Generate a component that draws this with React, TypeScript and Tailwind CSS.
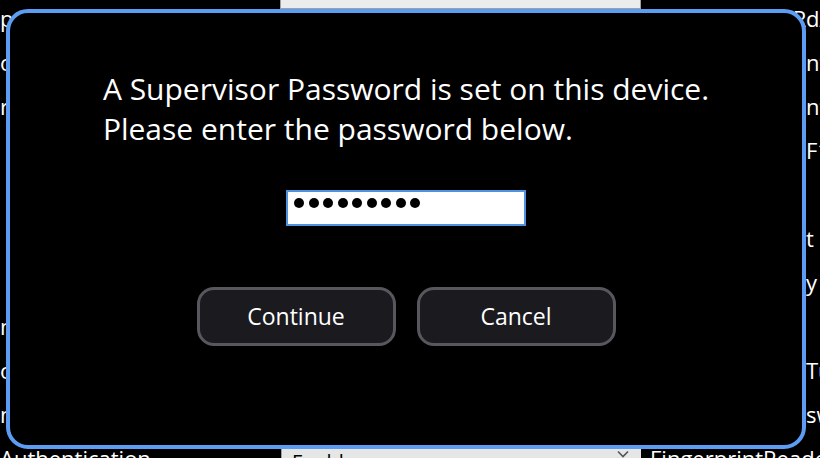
const rows = [
  { left: "ptionRomLaunch", hidden: "BiosPasswordRequire", shown: "dAtBoot" },
  { left: "owerOnPassword", hidden: "PasswordComplexityCheckI", shown: "nt" },
  { left: "r'sPasswordSet", hidden: "PasswordMinimumLengthCou", shown: "nt" },
  { left: "", hidden: "SecureBootKeyManagement", shown: "F1" },
  { left: "", hidden: "", shown: "" },
  { left: "", hidden: "TrustedPlatformModuleStat", shown: "t" },
  { left: "", hidden: "SecurityChipRecoveryKe", shown: "y" },
  { left: "nvironmentLock", hidden: "", shown: "" },
  { left: "oneTouchLogin", hidden: "IntelTrustedExecutionTec", shown: "Tu" },
  { left: "nStartupCheck", hidden: "HardDiskPasswordAnsw", shown: "sw" },
];

function Dots({ count }: { count: number }) {
  return (
    <div className="flex gap-[4.5px] pt-[6px]">
      {Array.from({ length: count }).map((_, i) => (
        <span key={i} className="h-[10px] w-[10px] rounded-full bg-black" />
      ))}
    </div>
  );
}

export default function App() {
  return (
    <div className="relative h-[458px] w-[820px] overflow-hidden bg-black font-['Segoe_UI','Open_Sans',sans-serif] text-white">
      {/* settings grid behind the dialog */}
      <div className="flex flex-col">
        <div className="ml-[280px] h-[9px] w-[361px] border-x border-b border-[#a0a0a0] bg-[#ececec]" />
        <div className="-mt-[13px] flex flex-col">
          {rows.map((r, i) => (
            <div key={i} className="flex h-[44px] items-center text-[22px] leading-[44px] whitespace-nowrap">
              <span className="w-[650px] shrink-0 overflow-hidden">{r.left}</span>
              <span className="inline-block w-[156px] shrink-0 overflow-hidden">{r.hidden}</span>
              <span className="shrink-0">{r.shown}</span>
            </div>
          ))}
          <div className="flex h-[44px] text-[22px] leading-[44px] whitespace-nowrap">
            <span className="w-[281px] shrink-0">Authentication</span>
            <div className="mt-[11px] flex h-[30px] w-[360px] shrink-0 items-start justify-between border-l border-[#a0a0a0] bg-[#e6e6e6] pl-[10px] pr-[12px] text-[20px] leading-[30px] text-black">
              <span>Enable</span>
              <svg width="12" height="8" viewBox="0 0 12 8" className="mt-[3px]">
                <path d="M1 1.5 6 6.5 11 1.5" fill="none" stroke="#555" strokeWidth="1.6" />
              </svg>
            </div>
            <span className="shrink-0 pl-[9px]">FingerprintReader</span>
          </div>
        </div>
      </div>

      {/* supervisor password dialog */}
      <div className="absolute left-[6px] top-[9px] flex h-[440px] w-[800px] flex-col items-center rounded-[22px] border-4 border-[#5c9df3] bg-black">
        <p className="mt-[56px] text-[30px] leading-[40px] text-white">
          A Supervisor Password is set on this device.
          <br />
          Please enter the password below.
        </p>

        <div className="mt-[41px] flex h-[36px] w-[240px] border-2 border-[#4f93e0] bg-white pl-[6px]">
          <Dots count={9} />
        </div>

        <div className="mt-[61px] flex gap-[21px]">
          <button className="h-[59px] w-[199px] rounded-[17px] border-[3px] border-[#58575d] bg-[#1b1a1f] text-[23px] text-white">
            Continue
          </button>
          <button className="h-[59px] w-[199px] rounded-[17px] border-[3px] border-[#58575d] bg-[#1b1a1f] text-[23px] text-white">
            Cancel
          </button>
        </div>
      </div>
    </div>
  );
}
